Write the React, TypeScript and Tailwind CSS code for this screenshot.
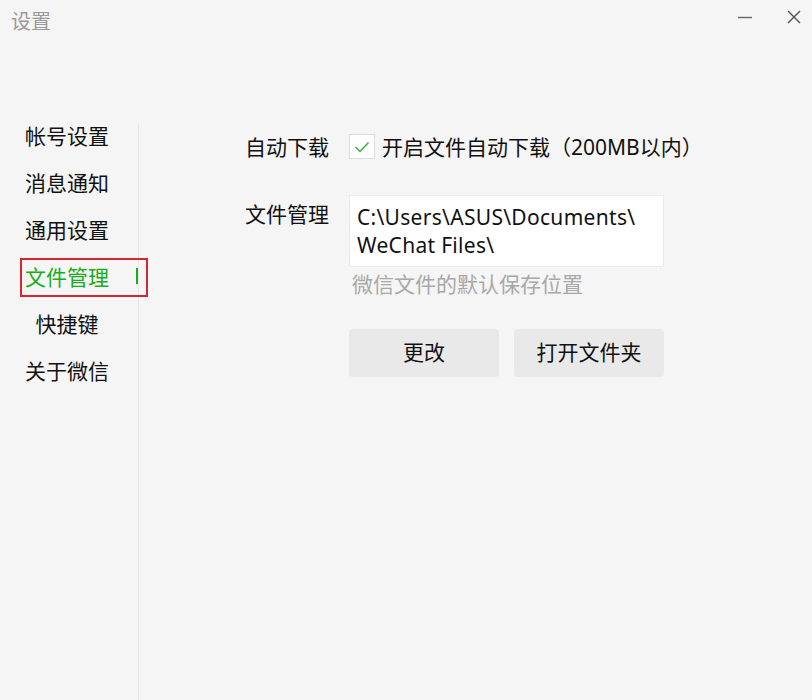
import React from "react";

const FONT = '"Noto Sans", "Noto Sans CJK SC", sans-serif';

export default function App() {
  const items = ["帐号设置", "消息通知", "通用设置", "文件管理", "快捷键", "关于微信"];
  return (
    <div
      className="w-[812px] h-[700px] bg-[#f5f5f5] flex flex-col overflow-hidden"
      style={{ fontFamily: FONT }}
    >
      {/* title bar */}
      <div className="h-[124px] flex items-start justify-between">
        <div className="pl-[11px] pt-[9px] text-[20px] leading-[26px] text-[#9a9a9a]">设置</div>
        <div className="flex items-start pt-[10px] pr-[11px] gap-[35px]">
          <svg width="14" height="14" viewBox="0 0 14 14">
            <line x1="0" y1="7.5" x2="14" y2="7.5" stroke="#666" strokeWidth="1.4" />
          </svg>
          <svg width="14" height="14" viewBox="0 0 14 14">
            <line x1="1" y1="1" x2="13" y2="13" stroke="#555" strokeWidth="1.4" />
            <line x1="13" y1="1" x2="1" y2="13" stroke="#555" strokeWidth="1.4" />
          </svg>
        </div>
      </div>

      <div className="flex flex-1">
        {/* sidebar */}
        <div className="w-[139px] border-r border-[#e6e6e6] flex flex-col gap-[23px]">
          {items.map((t) => {
            const active = t === "文件管理";
            return (
              <div key={t} className="relative w-[134px] h-[24px] flex items-center justify-center">
                <span
                  className={
                    "text-[21px] leading-[24px] " + (active ? "text-[#1aad19]" : "text-[#111]")
                  }
                >
                  {t}
                </span>
                {active && (
                  <>
                    <div className="absolute left-[20px] top-[-7px] w-[128px] h-[39px] border-2 border-[#d32630]" />
                    <div className="absolute left-[136px] top-[3px] w-[2px] h-[16px] bg-[#1aad19]" />
                  </>
                )}
              </div>
            );
          })}
        </div>

        {/* content */}
        <div className="flex flex-col pl-[106px] pt-[10px] text-[21px] text-[#111]">
          <div className="flex items-center h-[25px]">
            <div className="w-[104px] leading-[24px]">自动下载</div>
            <div className="w-[26px] h-[25px] bg-white border border-[#dcdcdc] flex items-center justify-center">
              <svg width="16" height="12" viewBox="0 0 16 12">
                <polyline points="1.5,6 6,10.5 14.5,1.5" fill="none" stroke="#3cb043" strokeWidth="1.5" />
              </svg>
            </div>
            <div className="ml-[7px] leading-[24px]">开启文件自动下载（200MB以内）</div>
          </div>

          <div className="flex items-start mt-[36px]">
            <div className="w-[104px] mt-[7px] leading-[24px]">文件管理</div>
            <div className="flex flex-col">
              <div className="w-[315px] bg-white border border-[#ececec] px-[7px] py-[7px] leading-[28px] text-[#111] tracking-[0.3px]">
                <div>C:\Users\ASUS\Documents\</div>
                <div>WeChat Files\</div>
              </div>
              <div className="mt-[5px] pl-[3px] leading-[24px] text-[#a8a8a8]">微信文件的默认保存位置</div>
              <div className="flex gap-[15px] mt-[33px]">
                <button className="w-[150px] h-[48px] rounded-[4px] bg-[#e9e9e9] text-[21px] text-[#111]">
                  更改
                </button>
                <button className="w-[150px] h-[48px] rounded-[4px] bg-[#e9e9e9] text-[21px] text-[#111]">
                  打开文件夹
                </button>
              </div>
            </div>
          </div>
        </div>
      </div>
    </div>
  );
}
